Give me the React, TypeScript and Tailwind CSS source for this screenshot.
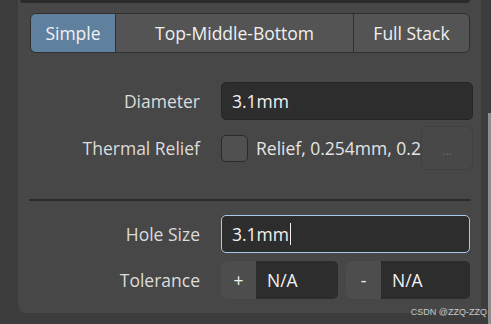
export default function App() {
  const font = { fontFamily: '"Open Sans", "Noto Sans", sans-serif' };
  return (
    <div className="flex h-[324px] w-[491px] bg-[#3c3c3c] text-[17.5px] text-[#dcdcdc]" style={font}>
      <div className="ml-[18px] flex h-[313px] w-[463px] flex-col rounded-bl-[8px] bg-[#474747]">
        <div className="ml-[2px] mr-[11px] h-[3px] rounded-b-[4px] bg-[#2a2a2a]" />

        {/* segmented control */}
        <div className="ml-[12px] mr-[11px] mt-[10px] flex h-[40px] overflow-hidden rounded-[6px] border border-[#2f2f2f] bg-[#545454]">
          <div className="flex w-[84px] items-center justify-center bg-[#5f809f] text-[#f2f2f2]">Simple</div>
          <div className="flex w-[239px] items-center justify-center border-x border-[#2f2f2f] text-[#f0f0f0]">
            Top-Middle-Bottom
          </div>
          <div className="flex flex-1 items-center justify-center text-[#f0f0f0]">Full Stack</div>
        </div>

        <div className="ml-[12px] mr-[11px] mt-[29px] grid grid-cols-[170px_1fr] items-center gap-x-[21px]">
          <div className="text-right">Diameter</div>
          <div className="flex h-[38px] items-center rounded-[5px] border border-[#262626] bg-[#2d2d2d] px-[10px] text-[#f2f2f2]">
            3.1mm
          </div>

          <div className="mt-[6px] text-right">Thermal Relief</div>
          <div className="mt-[6px] flex h-[44px] items-center">
            <div className="h-[27px] w-[27px] shrink-0 rounded-[5px] border border-[#2a2a2a] bg-[#505050]" />
            <div className="ml-[8px] whitespace-nowrap text-[#e4e4e4]">Relief, 0.254mm, 0.2</div>
            <div className="ml-auto flex h-[44px] w-[52px] items-center justify-center rounded-[6px] border border-[#404040] bg-[#484848] pt-[6px] text-[12px] text-[#6a6a6a]">
              ...
            </div>
          </div>
        </div>

        <div className="ml-[11px] mr-[10px] mt-[29px] h-[2px] bg-[#2c2c2c]" />

        <div className="ml-[12px] mr-[11px] mt-[14px] grid grid-cols-[170px_1fr] items-center gap-x-[21px]">
          <div className="text-right">Hole Size</div>
          <div className="flex h-[38px] items-center rounded-[5px] border border-[#a9c9ea] bg-[#2d2d2d] px-[10px] text-[#f2f2f2]">
            3.1mm
            <span className="ml-[1px] h-[22px] w-[1px] bg-[#f0f0f0]" />
          </div>

          <div className="mt-[8px] text-right">Tolerance</div>
          <div className="mt-[8px] flex h-[38px] gap-[8px]">
            <div className="flex w-[117px] overflow-hidden rounded-[5px] bg-[#2d2d2d]">
              <div className="flex w-[35px] items-center justify-center bg-[#4d4d4d] text-[#f2f2f2]">+</div>
              <div className="flex items-center px-[11px] text-[#f2f2f2]">N/A</div>
            </div>
            <div className="flex flex-1 overflow-hidden rounded-[5px] bg-[#2d2d2d]">
              <div className="flex w-[35px] items-center justify-center bg-[#4d4d4d] text-[#f2f2f2]">-</div>
              <div className="flex items-center px-[11px] text-[#f2f2f2]">N/A</div>
            </div>
          </div>
        </div>
      </div>

      <div className="relative flex w-[10px] flex-col">
        <div className="ml-auto mt-[113px] h-[211px] w-[3px] bg-[#8c8c8c]" />
        <div
          className="absolute right-[4px] top-[306px] whitespace-nowrap text-[9px] text-[#c8c8c8]"
          style={{ fontFamily: '"Liberation Sans", sans-serif' }}
        >
          CSDN @ZZQ-ZZQ
        </div>
      </div>
    </div>
  );
}
